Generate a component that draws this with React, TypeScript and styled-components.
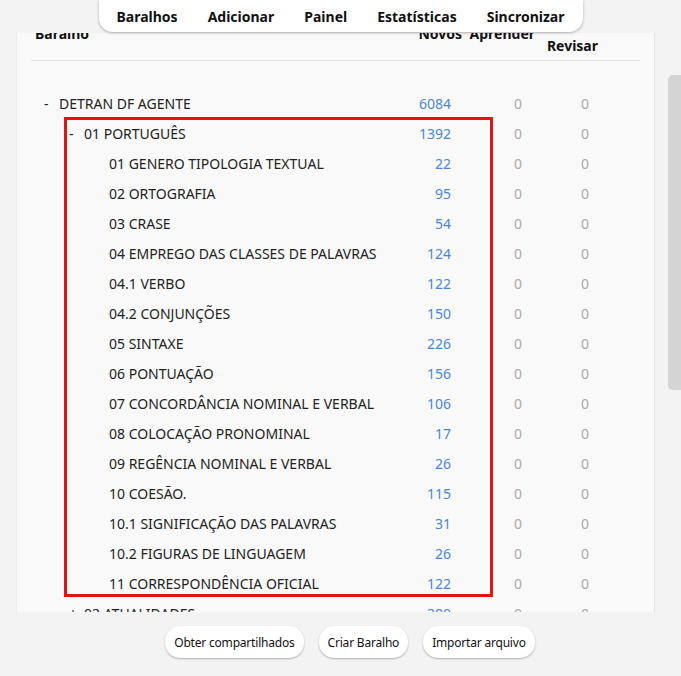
import React from "react";
import styled, { createGlobalStyle } from "styled-components";

const GlobalStyle = createGlobalStyle`
  html, body { margin: 0; padding: 0; }
  body {
    background: #f3f3f3;
    font-family: "Noto Sans", "Open Sans", "Liberation Sans", sans-serif;
    color: #1e1e1e;
    overflow: hidden;
  }
  * { box-sizing: border-box; }
`;

const Page = styled.div`
  width: 681px;
  height: 676px;
  display: flex;
  flex-direction: column;
  background: #f3f3f3;
`;

const TopBar = styled.div`
  height: 33px;
  flex: 0 0 33px;
  display: flex;
  justify-content: center;
  position: relative;
  z-index: 2;
`;

const Toolbar = styled.nav`
  height: 32px;
  width: 484px;
  background: #ffffff;
  border-radius: 0 0 14px 14px;
  box-shadow: 0 1px 3px rgba(0, 0, 0, 0.3);
  display: flex;
  align-items: center;
  justify-content: center;
  gap: 30px;
  padding: 0 18px 0 18px;
`;

const ToolItem = styled.span`
  font-weight: 700;
  font-size: 14px;
  color: #111;
  line-height: 32px;
  padding-top: 2px;
`;

const Main = styled.div`
  flex: 0 0 579px;
  display: flex;
`;

const Viewport = styled.div`
  width: 668px;
  height: 579px;
  overflow: hidden;
  position: relative;
`;

const ScrollTrack = styled.div`
  width: 13px;
  padding-top: 42px;
`;

const ScrollThumb = styled.div`
  width: 13px;
  height: 315px;
  background: #d4d4d4;
  border-radius: 5px 0 0 5px;
`;

const Panel = styled.section`
  margin: -24px 0 0 16px;
  width: 639px;
  background: #f9f9f9;
  border-right: 1px solid #e3e3e3;
  border-left: 1px solid #ececec;
  padding: 15px 14px 40px 14px;
`;

const Grid = styled.div`
  display: grid;
  grid-template-columns: 1fr 60px 73px 63px 42px;
`;

const HeaderRow = styled(Grid)`
  padding-bottom: 5px;
  border-bottom: 1px solid #e2e2e2;
  align-items: start;
`;

const HeadCell = styled.div<{ $align?: "left" | "right"; $drop?: number }>`
  font-size: 14px;
  font-weight: 700;
  line-height: 19px;
  color: #111;
  text-align: ${(p) => p.$align ?? "right"};
  padding-left: ${(p) => (p.$align === "left" ? "4px" : "0")};
  margin-top: ${(p) => p.$drop ?? 0}px;
  white-space: nowrap;
`;

const Body = styled.div`
  position: relative;
  padding-top: 27px;
`;

const Row = styled(Grid)`
  height: 30px;
  align-items: center;
  font-size: 14px;
`;

const NameCell = styled.div<{ $depth: number }>`
  padding-left: ${(p) => 13 + p.$depth * 25}px;
  display: flex;
  align-items: center;
  white-space: nowrap;
  color: #222;
`;

const Collapse = styled.span`
  display: inline-block;
  width: 15px;
  color: #222;
`;

const Count = styled.div<{ $tone: "new" | "zero"; $pad: number }>`
  text-align: right;
  padding-right: ${(p) => p.$pad}px;
  color: ${(p) => (p.$tone === "new" ? "#4a86d8" : "#a9a9a9")};
`;

const Highlight = styled.div`
  position: absolute;
  left: 33px;
  top: 56px;
  width: 429px;
  height: 480px;
  border: 3px solid #e01414;
  pointer-events: none;
`;

const BottomBar = styled.footer`
  flex: 1;
  display: flex;
  align-items: center;
  justify-content: center;
  gap: 15px;
  padding: 0 0 4px 19px;
`;

const Button = styled.button`
  height: 32px;
  padding: 0 9px;
  border: none;
  border-radius: 15px;
  background: #ffffff;
  box-shadow: 0 1px 2px rgba(0, 0, 0, 0.28);
  font-family: inherit;
  font-size: 12px;
  letter-spacing: -0.2px;
  color: #111;
`;

type Deck = { depth: number; toggle: string; name: string; count: number };

const decks: Deck[] = [
  { depth: 0, toggle: "-", name: "DETRAN DF AGENTE", count: 6084 },
  { depth: 1, toggle: "-", name: "01 PORTUGUÊS", count: 1392 },
  { depth: 2, toggle: "", name: "01 GENERO TIPOLOGIA TEXTUAL", count: 22 },
  { depth: 2, toggle: "", name: "02 ORTOGRAFIA", count: 95 },
  { depth: 2, toggle: "", name: "03 CRASE", count: 54 },
  { depth: 2, toggle: "", name: "04 EMPREGO DAS CLASSES DE PALAVRAS", count: 124 },
  { depth: 2, toggle: "", name: "04.1 VERBO", count: 122 },
  { depth: 2, toggle: "", name: "04.2 CONJUNÇÕES", count: 150 },
  { depth: 2, toggle: "", name: "05 SINTAXE", count: 226 },
  { depth: 2, toggle: "", name: "06 PONTUAÇÃO", count: 156 },
  { depth: 2, toggle: "", name: "07 CONCORDÂNCIA NOMINAL E VERBAL", count: 106 },
  { depth: 2, toggle: "", name: "08 COLOCAÇÃO PRONOMINAL", count: 17 },
  { depth: 2, toggle: "", name: "09 REGÊNCIA NOMINAL E VERBAL", count: 26 },
  { depth: 2, toggle: "", name: "10 COESÃO.", count: 115 },
  { depth: 2, toggle: "", name: "10.1 SIGNIFICAÇÃO DAS PALAVRAS", count: 31 },
  { depth: 2, toggle: "", name: "10.2 FIGURAS DE LINGUAGEM", count: 26 },
  { depth: 2, toggle: "", name: "11 CORRESPONDÊNCIA OFICIAL", count: 122 },
  { depth: 1, toggle: "+", name: "02 ATUALIDADES", count: 280 },
];

export default function App() {
  return (
    <>
      <GlobalStyle />
      <Page>
        <TopBar>
          <Toolbar>
            <ToolItem>Baralhos</ToolItem>
            <ToolItem>Adicionar</ToolItem>
            <ToolItem>Painel</ToolItem>
            <ToolItem>Estatísticas</ToolItem>
            <ToolItem>Sincronizar</ToolItem>
          </Toolbar>
        </TopBar>
        <Main>
          <Viewport>
            <Panel>
              <HeaderRow>
                <HeadCell $align="left">Baralho</HeadCell>
                <HeadCell>Novos</HeadCell>
                <HeadCell>Aprender</HeadCell>
                <HeadCell $drop={12}>Revisar</HeadCell>
                <HeadCell />
              </HeaderRow>
              <Body>
                {decks.map((d) => (
                  <Row key={d.name}>
                    <NameCell $depth={d.depth}>
                      <Collapse>{d.toggle}</Collapse>
                      {d.name}
                    </NameCell>
                    <Count $tone="new" $pad={11}>{d.count}</Count>
                    <Count $tone="zero" $pad={13}>0</Count>
                    <Count $tone="zero" $pad={9}>0</Count>
                    <div />
                  </Row>
                ))}
                <Highlight />
              </Body>
            </Panel>
          </Viewport>
          <ScrollTrack>
            <ScrollThumb />
          </ScrollTrack>
        </Main>
        <BottomBar>
          <Button>Obter compartilhados</Button>
          <Button>Criar Baralho</Button>
          <Button>Importar arquivo</Button>
        </BottomBar>
      </Page>
    </>
  );
}
